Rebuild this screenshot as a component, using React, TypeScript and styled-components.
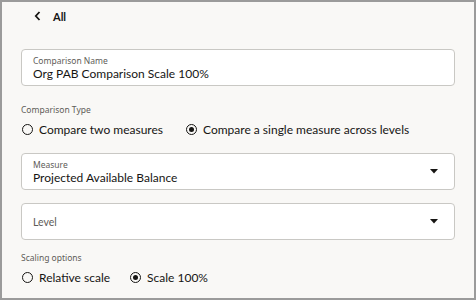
import React from 'react'
import styled, { createGlobalStyle } from 'styled-components'

const GlobalStyle = createGlobalStyle`
  html, body {
    margin: 0;
    padding: 0;
    background: #ffffff;
  }
  body {
    font-family: Lato, "Noto Sans", sans-serif;
    color: #161513;
  }
`

const Frame = styled.div`
  width: 476px;
  height: 300px;
  box-sizing: border-box;
  border: 2px solid #9b9b9b;
  background: #f9f8f6;
  padding: 0 19px 0 19px;
  display: flex;
  flex-direction: column;
`

const BackRow = styled.div`
  display: flex;
  align-items: center;
  gap: 12px;
  height: 28px;
  padding-left: 13px;
  font-size: 11px;
  font-weight: 700;
  margin-bottom: 19px;
`

const Field = styled.div<{ after: number }>`
  height: 37px;
  box-sizing: border-box;
  border: 1px solid #c9c8c4;
  border-radius: 4px;
  background: #ffffff;
  display: flex;
  align-items: center;
  padding: 0 16px 0 11px;
  margin-bottom: ${p => p.after}px;
`

const FieldText = styled.div`
  flex: 1;
  display: flex;
  flex-direction: column;
  justify-content: center;
`

const FieldLabel = styled.div`
  font-family: "Noto Sans", sans-serif;
  font-size: 8.5px;
  color: #5e5c58;
  line-height: 11px;
`

const FieldValue = styled.div`
  font-size: 12px;
  line-height: 15px;
  color: #161513;
`

const Placeholder = styled.div`
  font-size: 10.5px;
  color: #5e5c58;
  padding-top: 1px;
`

const GroupLabel = styled.div`
  font-family: "Noto Sans", sans-serif;
  font-size: 8.5px;
  color: #5e5c58;
  line-height: 11px;
  margin-bottom: 6px;
`

const RadioRow = styled.div<{ after: number }>`
  display: flex;
  align-items: center;
  height: 16px;
  margin-bottom: ${p => p.after}px;
`

const RadioOption = styled.label<{ gap: number }>`
  display: flex;
  align-items: center;
  font-size: 12px;
  margin-right: ${p => p.gap}px;
  white-space: nowrap;
`

const Circle = styled.span<{ checked?: boolean }>`
  width: 11px;
  height: 11px;
  box-sizing: border-box;
  border: 1.3px solid #161513;
  border-radius: 50%;
  margin: 0 6px 0 1px;
  display: flex;
  align-items: center;
  justify-content: center;
  &::after {
    content: '';
    width: 5px;
    height: 5px;
    border-radius: 50%;
    background: ${p => (p.checked ? '#161513' : 'transparent')};
  }
`

const Chevron = () => (
  <svg width="7" height="10" viewBox="0 0 7 10">
    <path d="M5.5 1 L1.8 5 L5.5 9" fill="none" stroke="#161513" strokeWidth="1.8" />
  </svg>
)

const Caret = () => (
  <svg width="8" height="5" viewBox="0 0 8 5">
    <path d="M0 0 H8 L4 4.5 Z" fill="#161513" />
  </svg>
)

const Radio: React.FC<{ label: string; checked?: boolean; gap: number }> = ({ label, checked, gap }) => (
  <RadioOption gap={gap}>
    <Circle checked={checked} />
    {label}
  </RadioOption>
)

export default function App() {
  return (
    <>
      <GlobalStyle />
      <Frame>
        <BackRow>
          <Chevron />
          <span>All</span>
        </BackRow>
        <Field after={18}>
          <FieldText>
            <FieldLabel>Comparison Name</FieldLabel>
            <FieldValue>Org PAB Comparison Scale 100%</FieldValue>
          </FieldText>
        </Field>
        <GroupLabel>Comparison Type</GroupLabel>
        <RadioRow after={16}>
          <Radio label="Compare two measures" gap={22} />
          <Radio label="Compare a single measure across levels" checked gap={0} />
        </RadioRow>
        <Field after={13}>
          <FieldText>
            <FieldLabel>Measure</FieldLabel>
            <FieldValue>Projected Available Balance</FieldValue>
          </FieldText>
          <Caret />
        </Field>
        <Field after={12}>
          <FieldText>
            <Placeholder>Level</Placeholder>
          </FieldText>
          <Caret />
        </Field>
        <GroupLabel>Scaling options</GroupLabel>
        <RadioRow after={0}>
          <Radio label="Relative scale" gap={19} />
          <Radio label="Scale 100%" checked gap={0} />
        </RadioRow>
      </Frame>
    </>
  )
}
